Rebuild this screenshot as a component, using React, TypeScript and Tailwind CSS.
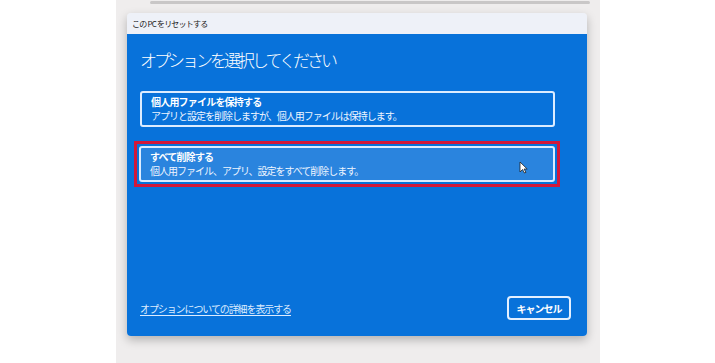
import React from 'react';

const jp = { fontFamily: '"Noto Sans CJK JP", "Noto Sans", sans-serif' };

const OptionButton: React.FC<{ title: string; desc: string; selected?: boolean }> = ({ title, desc, selected }) => (
  <div
    className={`w-full h-[36px] rounded-[3px] border-2 border-[#dcecff] px-[9px] flex flex-col justify-center text-white ${
      selected ? 'bg-[#2a84de]' : ''
    }`}
  >
    <div className="text-[10px] font-bold leading-[14px] tracking-[-0.8px]">{title}</div>
    <div className="text-[10px] leading-[14px] tracking-[-1px] text-[#eef5ff]">{desc}</div>
  </div>
);

export default function App() {
  return (
    <div className="w-[715px] h-[363px] flex bg-white overflow-hidden" style={jp}>
      <div className="w-[116px] bg-white" />
      <div className="w-[484px] bg-[#efeded] flex flex-col relative">
        <div className="h-[6px] overflow-hidden pl-[34px]">
          <div className="h-[3px] mt-[1px] w-[440px] bg-[#c9c7c7] rounded-sm blur-[0.6px]" />
        </div>
        <div className="pl-[11px] pt-[7px]">
          <div className="w-[460px] h-[323px] rounded-[4px] overflow-hidden shadow-[0_4px_10px_rgba(0,0,0,0.25)] flex flex-col">
            <div className="h-[21px] bg-[#eef1f8] flex items-center px-[5px] text-[8px] tracking-[-0.8px] text-[#222]">この PC をリセットする</div>
            <div className="flex-1 bg-[#0872da] flex flex-col px-[13px] pb-[16px] relative">
              <div className="mt-[13px] text-[17px] font-light text-white leading-[26px] tracking-[-3px]">オプションを選択してください</div>
              <div className="mt-[18px] pr-[19px]">
                <OptionButton title="個人用ファイルを保持する" desc="アプリと設定を削除しますが、個人用ファイルは保持します。" />
              </div>
              <div className="mt-[14px] -ml-[6px] mr-[14px] border-[3px] border-[#d2183a] p-[2px]">
                <OptionButton title="すべて削除する" desc="個人用ファイル、アプリ、設定をすべて削除します。" selected />
              </div>
              <div className="flex-1" />
              <div className="flex items-center justify-between">
                <span className="text-[10px] tracking-[-1.1px] text-[#dcecff] underline underline-offset-2">オプションについての詳細を表示する</span>
                <div className="w-[64px] h-[24px] mr-[3px] rounded-[4px] border-2 border-[#e4f0ff] flex items-center justify-center text-[10px] tracking-[-1px] font-bold text-white">
                  キャンセル
                </div>
              </div>
              <svg className="absolute left-[392px] top-[127px]" width="9" height="13" viewBox="0 0 9 13">
                <path d="M1 1 L1 11 L3.5 8.5 L5.5 12 L7 11.3 L5 8 L8.2 8 Z" fill="white" stroke="#222" strokeWidth="0.8" strokeLinejoin="round" />
              </svg>
            </div>
          </div>
        </div>
      </div>
      <div className="flex-1 bg-white" />
    </div>
  );
}
